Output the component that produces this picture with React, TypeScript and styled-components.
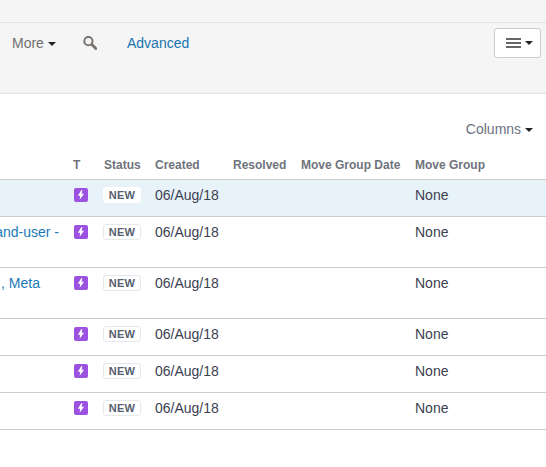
import React from "react";
import styled, { createGlobalStyle } from "styled-components";

const GlobalStyle = createGlobalStyle`
  html, body {
    margin: 0;
    padding: 0;
    background: #fff;
    overflow: hidden;
  }
  body {
    font-family: "Liberation Sans", Arial, sans-serif;
    font-size: 14px;
    line-height: 20px;
    color: #3b4151;
  }
`;

const COLUMNS = "73px 30px 52px 78px 68px 114px 1fr";

type Issue = { summary?: string; trail?: number; tall?: boolean; active?: boolean };

const issues: Issue[] = [
  { active: true },
  { summary: "and-user -", trail: 14, tall: true },
  { summary: ", Meta", trail: 33, tall: true },
  {},
  {},
  {},
];

const App = () => (
  <>
    <GlobalStyle />
    <Page>
      <TopStrip />
      <Toolbar>
        <ToolbarLeft>
          <MoreLink>
            More <Caret />
          </MoreLink>
          <SearchButton>
            <SearchIcon />
          </SearchButton>
          <AdvancedLink>Advanced</AdvancedLink>
        </ToolbarLeft>
        <MenuButton>
          <BarsIcon />
          <Caret />
        </MenuButton>
      </Toolbar>
      <ColumnsBar>
        <ColumnsLink>
          Columns <Caret />
        </ColumnsLink>
      </ColumnsBar>
      <Table>
        <HeaderRow>
          <span />
          <HeaderCell>T</HeaderCell>
          <HeaderCell $inset={1}>Status</HeaderCell>
          <HeaderCell>Created</HeaderCell>
          <HeaderCell>Resolved</HeaderCell>
          <HeaderCell>Move Group Date</HeaderCell>
          <HeaderCell>Move Group</HeaderCell>
        </HeaderRow>
        {issues.map((issue, i) => (
          <IssueRow key={i} $active={issue.active} $tall={issue.tall}>
            <SummaryCell $trail={issue.trail ?? 0}>
              {issue.summary && <SummaryLink>{issue.summary}</SummaryLink>}
            </SummaryCell>
            <Cell>
              <TypeIcon />
            </Cell>
            <Cell>
              <StatusBadge $active={issue.active}>NEW</StatusBadge>
            </Cell>
            <Cell>06/Aug/18</Cell>
            <Cell />
            <Cell />
            <Cell>None</Cell>
          </IssueRow>
        ))}
      </Table>
    </Page>
  </>
);

const SearchIcon = () => (
  <svg width="14" height="14" viewBox="0 0 14 14" fill="none">
    <circle cx="5.4" cy="5.2" r="4.1" stroke="#77736f" strokeWidth="2" />
    <path d="M8.8 8.6 12.8 12.6" stroke="#77736f" strokeWidth="2.8" strokeLinecap="round" />
  </svg>
);

const BarsIcon = () => (
  <svg width="15" height="10" viewBox="0 0 15 10" fill="#666">
    <rect x="0" y="0" width="15" height="2" />
    <rect x="0" y="4" width="15" height="2" />
    <rect x="0" y="8" width="15" height="2" />
  </svg>
);

const TypeIcon = () => (
  <TypeBox>
    <svg width="8" height="10" viewBox="0 0 8 10" fill="#fff">
      <path d="M4.2 0.2 0.9 5.8h2.3L2.6 9.8 7.1 3.8H4.6L5.4 0.2z" />
    </svg>
  </TypeBox>
);

const Page = styled.div`
  width: 546px;
  height: 467px;
  overflow: hidden;
`;

const TopStrip = styled.div`
  height: 22px;
  background: #f5f5f5;
  border-bottom: 1px solid #e3e3e3;
`;

const Toolbar = styled.div`
  display: flex;
  justify-content: space-between;
  align-items: flex-start;
  box-sizing: border-box;
  height: 71px;
  padding: 5px 5px 0 12px;
  background: #f5f5f5;
  border-bottom: 1px solid #e3e3e3;
`;

const ToolbarLeft = styled.div`
  display: flex;
  align-items: center;
  height: 30px;
`;

const MoreLink = styled.span`
  color: #707070;
  width: 71px;
`;

const Caret = styled.span`
  display: inline-block;
  width: 0;
  height: 0;
  vertical-align: middle;
  border-top: 4px solid #222;
  border-left: 4px solid transparent;
  border-right: 4px solid transparent;
`;

const SearchButton = styled.span`
  display: flex;
  width: 44px;
`;

const AdvancedLink = styled.span`
  color: #1a73b0;
`;

const MenuButton = styled.div`
  display: flex;
  align-items: center;
  justify-content: center;
  gap: 4px;
  box-sizing: border-box;
  width: 47px;
  height: 30px;
  padding-left: 3px;
  background: #fff;
  border: 1px solid #ccc;
  border-radius: 3px;
`;

const ColumnsBar = styled.div`
  display: flex;
  justify-content: flex-end;
  height: 45px;
  padding: 25px 13px 0 0;
  box-sizing: border-box;
`;

const ColumnsLink = styled.span`
  color: #6b7280;
`;

const Table = styled.div`
  display: flex;
  flex-direction: column;
`;

const HeaderRow = styled.div`
  display: grid;
  grid-template-columns: ${COLUMNS};
  align-items: center;
  box-sizing: border-box;
  height: 41px;
  padding-top: 12px;
  border-bottom: 1px solid #ccc;
`;

const HeaderCell = styled.span<{ $inset?: number }>`
  padding-left: ${(props) => props.$inset ?? 0}px;
  font-size: 12px;
  font-weight: bold;
  color: #6f737c;
  white-space: nowrap;
`;

const IssueRow = styled.div<{ $active?: boolean; $tall?: boolean }>`
  display: grid;
  grid-template-columns: ${COLUMNS};
  box-sizing: border-box;
  height: ${(props) => (props.$tall ? "51px" : "37px")};
  padding-top: 5px;
  background: ${(props) => (props.$active ? "#e8f2f9" : "#fff")};
  border-bottom: 1px solid #ccc;
`;

const Cell = styled.div`
  display: flex;
  align-items: flex-start;
  height: 20px;
`;

const SummaryCell = styled(Cell)<{ $trail: number }>`
  justify-content: flex-end;
  overflow: hidden;
  white-space: nowrap;
  padding-right: ${(props) => props.$trail}px;
`;

const SummaryLink = styled.span`
  color: #1a7ab8;
`;

const TypeBox = styled.span`
  display: flex;
  align-items: center;
  justify-content: center;
  width: 14px;
  height: 14px;
  margin: 3px 0 0 1px;
  background: #9c52e0;
  border-radius: 2px;
`;

const StatusBadge = styled.span<{ $active?: boolean }>`
  box-sizing: border-box;
  width: 38px;
  height: 16px;
  margin-top: 2px;
  text-align: center;
  font-size: 11px;
  font-weight: bold;
  line-height: 14px;
  letter-spacing: 0.2px;
  color: #56606f;
  background: #fff;
  border: 1px solid ${(props) => (props.$active ? "#fff" : "#e4e9f0")};
  border-radius: 3px;
`;

export default App;
